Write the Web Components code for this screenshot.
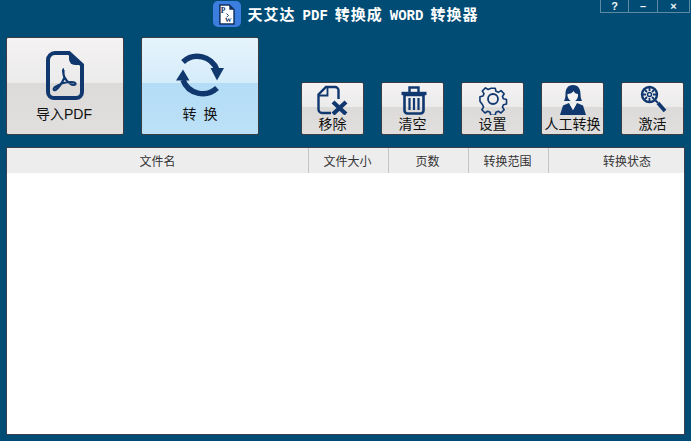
<!DOCTYPE html>
<html lang="zh">
<head>
<meta charset="utf-8">
<title>天艾达 PDF 转换成 WORD 转换器</title>
<style>
    html, body { margin: 0; height: 100%; }
    body { background: #004c74; font-family: "Liberation Sans", "Noto Sans CJK SC", sans-serif; overflow: hidden; }
</style>
</head>
<body>
<app-window>
    <title-bar slot="title">天艾达<span>PDF</span>转换成<span>WORD</span>转换器</title-bar>
    <tool-bar slot="tools">
        <tool-button size="big" label="导入PDF">
            <svg viewBox="0 0 38 49" width="38" height="49">
                <path d="M9 2H23L36 14V41a6 6 0 0 1-6 6H8a6 6 0 0 1-6-6V9a7 7 0 0 1 7-7Z" fill="none" stroke="#10386f" stroke-width="4"/>
                <path d="M23 2V8a6 6 0 0 0 6 6h7Z" fill="#10386f"/>
                <path d="M18 18c-1.500 0-1 4.500.5 8.500C16 32 12.500 37 9.500 39c-2 1-2.500-1-1-2.500 4-3 11-5.500 17-5.500 2.500 0 4 .5 4 1.800s-3 1.500-5 0c-3-2-5.500-5-6.500-7.300-1-3-.5-7.500 0-7.500Z" fill="none" stroke="#10386f" stroke-width="2.200"/>
            </svg>
        </tool-button>
        <tool-button size="big" tone="blue" label="转 换">
            <svg viewBox="0 0 48 48" width="48" height="48">
                <path d="M7 11A21 21 0 0 1 41 19" fill="none" stroke="#10386f" stroke-width="5.500"/>
                <path d="M34.500 17H48L41 29.500Z" fill="#10386f"/>
                <path d="M41 37A21 21 0 0 1 7 29" fill="none" stroke="#10386f" stroke-width="5.500"/>
                <path d="M0 29.500H13.500L7 18.500Z" fill="#10386f"/>
            </svg>
        </tool-button>
        <span class="spacer"></span>
        <tool-button label="移除">
            <svg viewBox="0 0 31 30" width="31" height="30">
                <path d="M14 28H5a3.500 3.500 0 0 1-3.500-3.500V9.500L9 2H18a3.500 3.500 0 0 1 3.500 3.500V14" fill="none" stroke="#10386f" stroke-width="2.400"/>
                <path d="M2 10.500H10.500V2" fill="none" stroke="#10386f" stroke-width="1.800"/>
                <path d="M16 17L29 29M29 17L16 29" stroke="#10386f" stroke-width="4.200" fill="none"/>
            </svg>
        </tool-button>
        <tool-button label="清空">
            <svg viewBox="0 0 30 30" width="30" height="30">
                <path d="M3.500 8.500H28.500" stroke="#10386f" stroke-width="3.400" fill="none"/>
                <path d="M11.500 7V2.500H20.500V7" fill="none" stroke="#10386f" stroke-width="2.400"/>
                <path d="M6.500 10H25.500V25.500a3 3 0 0 1-3 3H9.500a3 3 0 0 1-3-3Z" fill="none" stroke="#10386f" stroke-width="2.600"/>
                <path d="M11.500 13V25M16 13V25M20.500 13V25" stroke="#10386f" stroke-width="2.200" fill="none"/>
            </svg>
        </tool-button>
        <tool-button label="设置">
            <svg viewBox="0 0 30 30" width="30" height="30">
                <path d="M12.500 3h5l.8 3.500 2.600 1.100 3-1.900 3.500 3.500-1.900 3 1.100 2.600 3.400.8v5l-3.400.8-1.100 2.600 1.900 3-3.500 3.500-3-1.900-2.600 1.100-.8 3.300h-5l-.8-3.300-2.600-1.100-3 1.900-3.500-3.500 1.900-3-1.100-2.600L.500 17.500v-5l3.400-.8 1.100-2.600-1.900-3 3.500-3.500 3 1.900 2.600-1.100Z" transform="translate(1.500 .5) scale(.9)" fill="none" stroke="#10386f" stroke-width="1.800" stroke-linejoin="round"/>
                <circle cx="15" cy="14" r="5" fill="none" stroke="#10386f" stroke-width="1.800"/>
            </svg>
        </tool-button>
        <tool-button label="人工转换">
            <svg viewBox="0 0 30 30" width="30" height="30">
                <path d="M15 0C9.500 0 7.500 4 7.500 9c0 3-.5 5-1.500 7h18c-1-2-1.500-4-1.500-7 0-5-2-9-7.500-9Z" fill="#10386f"/>
                <path d="M9.500 9c2.500 0 5-1 6-3 1 2 2.500 3 4.500 3 .5 4-2 7.500-5 7.500S9 13 9.500 9Z" fill="#f4f2f2"/>
                <path d="M11 18L5 20.500 2 30H28L25 20.500 19 18 15 25Z" fill="#10386f"/>
                <path d="M11.500 18.500L15 25 18.500 18.500 15 20Z" fill="#f4f2f2"/>
            </svg>
        </tool-button>
        <tool-button label="激活">
            <svg viewBox="0 0 30 30" width="30" height="30">
                <circle cx="11.500" cy="9.500" r="7.500" fill="none" stroke="#10386f" stroke-width="2.400"/>
                <circle cx="11.500" cy="9.500" r="2" fill="none" stroke="#10386f" stroke-width="1.500"/>
                <path d="M11.500 3V6M11.500 13V16M5 9.500H8M15 9.500H18M7 5L9 7M14 12L16 14M16 5L14 7M9 12L7 14" stroke="#10386f" stroke-width="1.800" fill="none"/>
                <path d="M17 15L20 18" stroke="#10386f" stroke-width="2" fill="none"/>
                <path d="M20 18L27 26" stroke="#10386f" stroke-width="3.600" fill="none"/>
            </svg>
        </tool-button>
    </tool-bar>
    <file-table slot="table"></file-table>
</app-window>

<script>
class AppWindow extends HTMLElement {
    constructor() {
        super();
        this.attachShadow({ mode: 'open' });
    }

    connectedCallback() {
        this.shadowRoot.innerHTML = `
        <style>
            :host {
                display: flex;
                flex-direction: column;
                height: 441px;
                box-sizing: border-box;
                padding: 0 6px 6px 6px;
            }
            .table { display: flex; flex: 1; margin-top: 12px; }
            ::slotted(file-table) { flex: 1; }
        </style>
        <slot name="title"></slot>
        <slot name="tools"></slot>
        <div class="table"><slot name="table"></slot></div>
        `;
    }
}

class TitleBar extends HTMLElement {
    constructor() {
        super();
        this.attachShadow({ mode: 'open' });
    }

    connectedCallback() {
        this.shadowRoot.innerHTML = `
        <style>
            :host {
                display: flex;
                align-items: flex-start;
                justify-content: center;
                gap: 7px;
                height: 30px;
                margin-bottom: 7px;
                padding-top: 1px;
                box-sizing: border-box;
                color: #fff;
            }
            .logo {
                width: 28px;
                height: 26px;
                border-radius: 5px;
                background: #3c7de0;
                display: flex;
                align-items: center;
                justify-content: center;
            }
            .text {
                font: bold 15px/26px "Noto Sans CJK SC", sans-serif;
                letter-spacing: 1px;
                white-space: nowrap;
            }
            ::slotted(span) {
                font: bold 14px/26px "Liberation Mono", monospace;
                letter-spacing: 0;
                margin: 0 7px;
            }
            .controls {
                position: absolute;
                top: 0;
                right: 1px;
                display: flex;
            }
            .controls span {
                height: 12px;
                text-align: center;
                border: 1px solid #5f8aa3;
                border-top: 0;
                margin-left: -1px;
                font: bold 11px/13px "Liberation Sans", sans-serif;
                color: #f2f6f8;
            }
        </style>
        <div class="logo">
            <svg viewBox="0 0 18 22" width="17" height="21">
                <path d="M2 1H12L17 6V21H2Z" fill="#fff" stroke="#10305f" stroke-width="1.600"/>
                <path d="M12 1V6H17Z" fill="#10305f"/>
                <path d="M9 10L11 12 9 14" fill="none" stroke="#10305f" stroke-width="1"/>
                <text x="3" y="9" font-family="Liberation Serif" font-size="8" font-weight="bold" fill="#10305f">P</text>
                <text x="7.500" y="19" font-family="Liberation Serif" font-size="7" font-weight="bold" fill="#10305f">W</text>
            </svg>
        </div>
        <div class="text"><slot></slot></div>
        <div class="controls">
            <span style="width:27px">?</span>
            <span style="width:28px">–</span>
            <span style="width:31px">×</span>
        </div>
        `;
    }
}

class ToolBar extends HTMLElement {
    constructor() {
        super();
        this.attachShadow({ mode: 'open' });
    }

    connectedCallback() {
        this.shadowRoot.innerHTML = `
        <style>
            :host {
                display: flex;
                align-items: flex-end;
                gap: 17px;
                height: 98px;
            }
            ::slotted(*) { flex-shrink: 0; }
            ::slotted(.spacer) { width: 8px; }
        </style>
        <slot></slot>
        `;
    }
}

class ToolButton extends HTMLElement {
    constructor() {
        super();
        this.attachShadow({ mode: 'open' });
    }

    connectedCallback() {
        const label = this.getAttribute('label');
        this.shadowRoot.innerHTML = `
        <style>
            :host {
                display: flex;
                flex-direction: column;
                align-items: center;
                box-sizing: border-box;
                width: 63px;
                height: 53px;
                padding-top: 2px;
                border: 1px solid #3b3f45;
                border-radius: 2px;
                background: linear-gradient(#f4f2f2 0, #ecebeb 47%, #dcdbda 47%, #e0dfde 100%);
                color: #111;
                font: 14px/18px "Liberation Sans", "Noto Sans CJK SC", sans-serif;
                white-space: pre;
            }
            :host([size="big"]) {
                width: 118px;
                height: 98px;
                padding-top: 13px;
            }
            :host([tone="blue"]) {
                background: linear-gradient(#e6f4fc 0, #d5ecfa 47%, #b3dcf6 47%, #bce1f7 100%);
            }
            :host([tone="blue"]) .label { word-spacing: 3px; }
            .icon { display: flex; height: 30px; }
            :host([size="big"]) .icon { height: 49px; }
            .label { margin-top: 0; }
            :host([size="big"]) .label { margin-top: 5px; margin-right: 2px; }
            :host([tone="blue"]) .label { margin-right: 0; }
        </style>
        <div class="icon"><slot></slot></div>
        <div class="label">${label}</div>
        `;
    }
}

class FileTable extends HTMLElement {
    constructor() {
        super();
        this.attachShadow({ mode: 'open' });
    }

    connectedCallback() {
        this.shadowRoot.innerHTML = `
        <style>
            :host {
                display: block;
                box-sizing: border-box;
                background: #fff;
                border: 1px solid #3b3f50;
                font: 12px/25px "Noto Sans CJK SC", sans-serif;
                color: #333;
            }
            .head {
                display: grid;
                grid-template-columns: 302px 80px 80px 80px 1fr;
                height: 25px;
                background: #eeedee;
            }
            .head div { text-align: center; border-right: 1px solid #c4c4c4; padding-right: 2px; }
            .head div:first-child { padding-right: 0; }
            .head div:last-child { border-right: 0; padding: 0 0 0 21px; }
        </style>
        <div class="head">
            <div>文件名</div>
            <div>文件大小</div>
            <div>页数</div>
            <div>转换范围</div>
            <div>转换状态</div>
        </div>
        `;
    }
}

customElements.define('app-window', AppWindow);
customElements.define('title-bar', TitleBar);
customElements.define('tool-bar', ToolBar);
customElements.define('tool-button', ToolButton);
customElements.define('file-table', FileTable);
</script>
</body>
</html>
